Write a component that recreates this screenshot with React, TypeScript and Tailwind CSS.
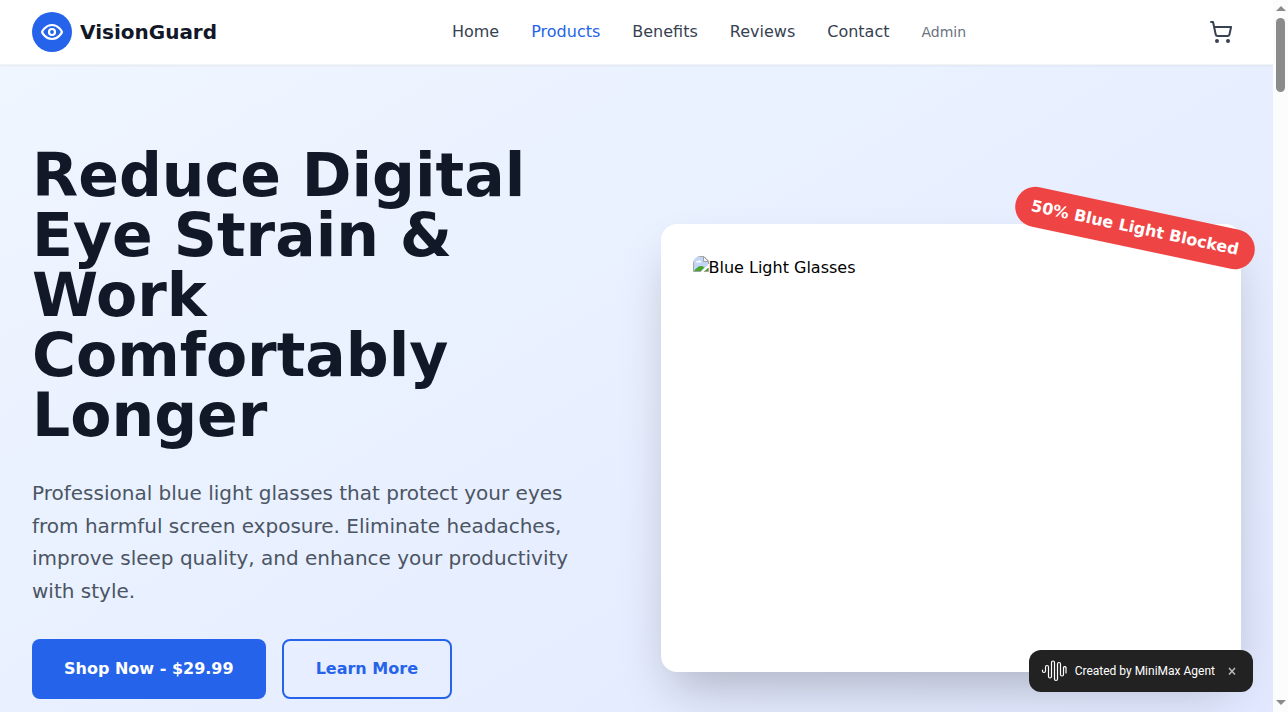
import { ShoppingCart } from "lucide-react";

const links = [
  { label: "Home", href: "#home", style: "text-[#374151]" },
  { label: "Products", href: "#products", style: "text-[#2563eb]" },
  { label: "Benefits", href: "#benefits", style: "text-[#374151]" },
  { label: "Reviews", href: "#reviews", style: "text-[#374151]" },
  { label: "Contact", href: "#contact", style: "text-[#374151]" },
  { label: "Admin", href: "#admin", style: "text-sm text-[#6b7280]" },
];

function EyeMark() {
  return (
    <svg viewBox="0 0 24 24" className="size-6" fill="none" stroke="currentColor" strokeWidth="2.2" strokeLinecap="round" strokeLinejoin="round" aria-hidden="true">
      <path d="M2 12s3-7 10-7 10 7 10 7-3 7-10 7-10-7-10-7Z" />
      <circle cx="12" cy="12" r="3" />
    </svg>
  );
}

function Header() {
  return (
    <header className="relative z-10 border-b border-[#f3f4f6] bg-white shadow-[0_1px_2px_0_rgba(0,0,0,0.05)]">
      <div className="mx-auto flex h-16 max-w-7xl items-center justify-between px-8">
        <a href="#home" className="flex items-center gap-2">
          <span className="flex size-10 items-center justify-center rounded-full bg-[#2563eb] text-white">
            <EyeMark />
          </span>
          <span className="text-xl font-bold text-[#111827]">VisionGuard</span>
        </a>
        <nav className="flex items-center gap-8">
          {links.map((link) => (
            <a key={link.label} href={link.href} className={link.style}>
              {link.label}
            </a>
          ))}
        </nav>
        <button type="button" aria-label="Cart" className="p-2 text-[#374151]">
          <ShoppingCart size={24} />
        </button>
      </div>
    </header>
  );
}

function MissingImage() {
  return (
    <svg viewBox="0 0 16 16" className="size-4 shrink-0" aria-hidden="true">
      <path d="M0.5 15.5V0.500H11L15.500 5V8" fill="none" stroke="#a3a3a3" />
      <path d="M1 1H10.500L15 5.500V9L8.500 15H1Z" fill="#c2d5f7" />
      <path d="M3 6.500C3 5 4.500 5 5 5.200C5.300 3.800 7.500 4 7.600 5.300C8.800 5.300 8.800 6.500 8 6.500Z" fill="#fff" />
      <path d="M1 15C3 12 5.500 10 8 10C9.500 10 10.500 10.700 11.500 11.500L8 15Z" fill="#4aa52e" />
      <path d="M15 12L11.500 15H15Z" fill="#4aa52e" />
      <path d="M0.500 15.500H8M11 15.500H15.500V12" fill="none" stroke="#a3a3a3" />
      <path d="M10.500 0.500V5.500H15.500Z" fill="#f4f4f4" stroke="#a3a3a3" />
    </svg>
  );
}

function Hero() {
  return (
    <section className="bg-[linear-gradient(to_bottom_right,#eff6ff,#e0e7ff)] py-20">
      <div className="mx-auto grid max-w-7xl grid-cols-2 items-center gap-12 px-8">
        <div className="space-y-8 pb-13">
          <h1 className="text-6xl leading-none font-bold text-[#111827]">
            Reduce Digital Eye Strain &amp; Work Comfortably Longer
          </h1>
          <p className="text-xl leading-relaxed text-[#4b5563]">
            Professional blue light glasses that protect your eyes from harmful
            screen exposure. Eliminate headaches, improve sleep quality, and
            enhance your productivity with style.
          </p>
          <div className="flex gap-4">
            <button
              type="button"
              className="rounded-lg bg-[#2563eb] px-8 py-4 font-semibold text-white"
            >
              Shop Now - $29.99
            </button>
            <button
              type="button"
              className="rounded-lg border-2 border-[#2563eb] px-8 py-4 font-semibold text-[#2563eb]"
            >
              Learn More
            </button>
          </div>
        </div>
        <div className="relative rounded-2xl bg-white p-8 shadow-[0_25px_50px_-12px_rgba(0,0,0,0.25)]">
          <div
            role="img"
            aria-label="Blue Light Glasses"
            className="flex h-96 items-start overflow-hidden rounded-lg text-black"
          >
            <MissingImage />
            <span>Blue Light Glasses</span>
          </div>
          <div className="absolute -top-4 -right-4 rotate-12 rounded-full bg-[#ef4444] px-4 py-2 font-semibold whitespace-nowrap text-white">
            50% Blue Light Blocked
          </div>
        </div>
      </div>
    </section>
  );
}

function AgentBadge() {
  return (
    <div className="absolute right-5 bottom-5 z-20 flex h-[42px] items-center rounded-xl bg-[#222] pr-4 pl-3 font-['Roboto',sans-serif] text-xs text-white">
      <svg viewBox="0 0 26 24" className="mr-2 h-6 w-[26px]" fill="none" stroke="currentColor" strokeWidth="1.2" strokeLinecap="round" aria-hidden="true">
        <path d="M1.500 11V12A1.500 1.500 0 0 0 4.500 12V8A1.500 1.500 0 0 1 7.500 8V17.500A1.500 1.500 0 0 0 10.500 17.500V3.500A1.500 1.500 0 0 1 13.500 3.500V20A1.500 1.500 0 0 0 16.500 20V5A1.500 1.500 0 0 1 19.500 5V15.500A1.500 1.500 0 0 0 22.500 15.500V8.500A1.300 1.300 0 0 1 25 8.500V14" />
      </svg>
      <span>Created by MiniMax Agent</span>
      <button type="button" aria-label="Close" className="ml-3 text-[#bbb]">
        <svg viewBox="0 0 10 10" className="size-[10px]" stroke="currentColor" strokeWidth="1.5" aria-hidden="true">
          <path d="M2 2L8 8.500M8 2L2 8.500" />
        </svg>
      </button>
    </div>
  );
}

function Scrollbar() {
  return (
    <div className="flex w-[15px] shrink-0 flex-col items-center justify-between bg-[#fcfcfc] pt-[6px] pb-[7px]" aria-hidden="true">
      <div className="flex flex-col items-center gap-[7px]">
        <svg viewBox="0 0 10 5" className="h-[5px] w-[10px]" fill="#8b8b8b">
          <path d="M5 0L10 5H0Z" />
        </svg>
        <div className="h-[74px] w-[9px] rounded-full bg-[#8b8b8b]" />
      </div>
      <svg viewBox="0 0 10 5" className="h-[5px] w-[10px]" fill="#8b8b8b">
        <path d="M0 0H10L5 5Z" />
      </svg>
    </div>
  );
}

export default function App() {
  return (
    <div className="flex h-screen overflow-hidden font-['DejaVu_Sans',sans-serif]">
      <main className="relative min-w-0 flex-1 overflow-hidden bg-white">
        <Header />
        <Hero />
        <AgentBadge />
      </main>
      <Scrollbar />
    </div>
  );
}
